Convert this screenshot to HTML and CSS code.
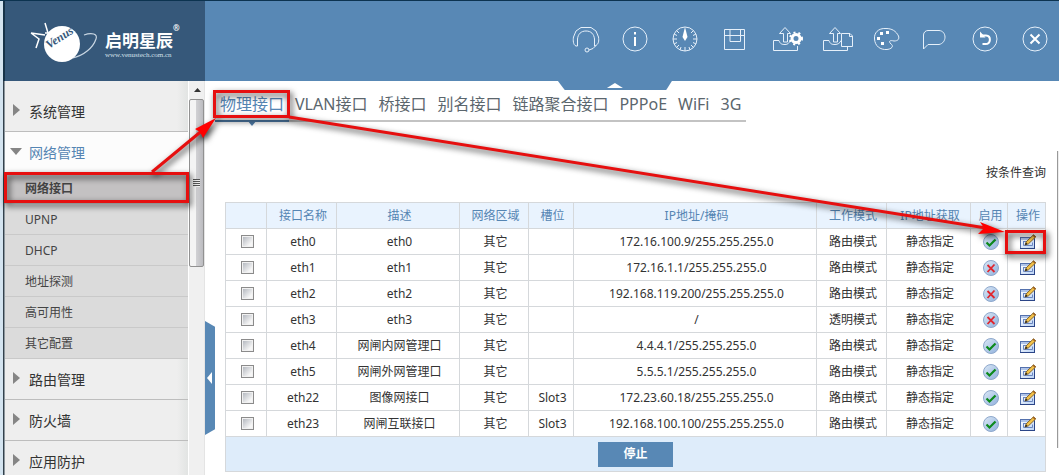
FILE: index.html
```
<!DOCTYPE html>
<html lang="zh-CN">
<head>
<meta charset="utf-8">
<title>物理接口</title>
<link rel="stylesheet" href="styles.css">
</head>
<body>
<svg class="symbols" aria-hidden="true">
  <defs>
    <linearGradient id="orb" x1="0" y1="0" x2="1" y2="1">
      <stop offset="0" stop-color="#dce9f6"/><stop offset="1" stop-color="#8fb0dc"/>
    </linearGradient>
    <linearGradient id="win" x1="0" y1="0" x2="1" y2="1">
      <stop offset="0" stop-color="#ffffff"/><stop offset="1" stop-color="#b9d2f5"/>
    </linearGradient>
    <symbol id="on" viewBox="0 0 16 16">
      <circle cx="8" cy="8" r="7.5" fill="url(#orb)" stroke="#8ea8cc"/>
      <path d="M3.5 8.5 L6.5 11.5 L12.5 5.5" fill="none" stroke="#0c8a1c" stroke-width="2.2"/>
    </symbol>
    <symbol id="off" viewBox="0 0 16 16">
      <circle cx="8" cy="8" r="7.5" fill="url(#orb)" stroke="#8ea8cc"/>
      <path d="M4.500 5 L11.500 12 M11.500 4.500 L4.500 12" fill="none" stroke="#e0262e" stroke-width="1.800"/>
    </symbol>
    <symbol id="edit" viewBox="0 0 18 16">
      <rect x="1.500" y="3.500" width="14" height="11" fill="url(#win)" stroke="#5471ad"/>
      <path d="M1 14.500 H16 M15.500 5 V15" stroke="#2b4587" fill="none"/>
      <path d="M2 5 H12" stroke="#6f93d6"/>
      <path d="M4.500 7.500 H8 M4.500 7 V11.500 H13.500 V8.500" fill="none" stroke="#6a86c0"/>
      <path d="M6 11 L7.200 7.800 L14.500 .8 L16.800 2.800 L9.500 9.800 Z" fill="#f3c24a" stroke="#6b4a12" stroke-width=".8"/>
      <path d="M14 1.300 L16.300 3.300" stroke="#a2601c" stroke-width="1.300"/>
      <path d="M6 11 L7 8.500 L8.500 10 Z" fill="#222"/>
    </symbol>
  </defs>
</svg>

<div class="window">
  <header class="header">
    <div class="brand">
      <svg class="brand-mark" viewBox="0 0 72 44" aria-hidden="true">
        <path d="M54 14 C62 11 68 13 66 18 C63 27 54 34 43 37" fill="none" stroke="#c9d6e3" stroke-width="1.200"/>
        <path d="M15 2 L18 12 M1 12 L15 14 M1 12 L9 18 L6 27" fill="none" stroke="#fff" stroke-width="1.500"/>
        <circle cx="32" cy="23" r="18" fill="#fff"/>
        <path d="M15 12 L30 12" stroke="#fff" stroke-width="1.500"/>
        <text class="brand-venus" x="19" y="28" transform="rotate(-33 19 28)">Venus</text>
      </svg>
      <div class="brand-text">
        <strong class="brand-name">启明星辰<sup>®</sup></strong>
        <span class="brand-url">www.venustech.com.cn</span>
      </div>
    </div>
    <nav class="tools">
      <button class="tool" aria-label="技术支持"><svg viewBox="0 0 50 44"><path d="M18.500 27 H17 C14 26 14 21 14.500 18 L17 12 L22 8.500 H32 L37 12 L39.500 18 C40 22 40 25 36 27 H35.500 V20 C35 15 32 12 27 12 C22 12 19 15 18.500 20 Z M37 26.500 L34 29.500 L30 31"/><circle cx="28" cy="31" r="2"/></svg></button>
      <button class="tool" aria-label="信息"><svg viewBox="0 0 50 44"><circle cx="26" cy="20" r="12"/><path class="bold" d="M26 18 V27 M26 13 V15.500"/></svg></button>
      <button class="tool" aria-label="监控"><svg viewBox="0 0 50 44"><circle cx="26" cy="20" r="12"/><path d="M26 28 V32 M14 20 H18 M34 20 H38 M17.500 11.500 L20 14 M34.500 11.500 L32 14 M17.500 28.500 L20 26 M34.500 28.500 L32 26 M15 15 L18 16.500 M37 15 L34 16.500 M15 25 L18 23.500 M37 25 L34 23.500 M21 31 L22 28 M31 31 L30 28"/><path class="solid" d="M26 8 L28.500 18 L26 22 L23.500 18 Z"/></svg></button>
      <button class="tool" aria-label="保存"><svg viewBox="0 0 50 44"><path d="M15.500 10.500 H35.500 V30.500 H15.500 Z M15.500 16.500 H35.500 M21 10.500 V22.500 H31.500 V10.500"/></svg></button>
      <button class="tool" aria-label="导出配置"><svg viewBox="0 0 50 44"><path d="M20 21.500 H14.500 V31.500 H38.500 V27 M20 21.500 C21 25 23 25.500 26 25.500 C29 25.500 30 24 31 22 M24.500 23 V14.500 H20.500 L26 8.500 L31.500 14.500 H28.500 V23 Z"/><circle class="thick" cx="37" cy="19.500" r="4"/><circle class="teeth" cx="37" cy="19.500" r="6"/></svg></button>
      <button class="tool" aria-label="导出文件"><svg viewBox="0 0 50 44"><path d="M20 21.500 H14.500 V31.500 H38.500 V28 M20 21.500 C21 25 23 25.500 26 25.500 C29 25.500 31 24 32 21.500 M24.500 23 V14.500 H20.500 L26 8.500 L31.500 14.500 H28.500 V23 Z M32.500 14.500 H41 L43.500 17 V27.500 H32.500 Z M40.500 14.500 V17.500 H43.500"/></svg></button>
      <button class="tool" aria-label="主题"><svg viewBox="0 0 50 44"><path d="M27 9.500 C19 9 15 14 15.500 20 C16 27 21 31 28 30.500 C33 30 35 27 32 25 C29 22 31 21 35 22 C39 22 40.500 20 39.500 17 C37 12 33 9.500 27 9.500 Z"/><path class="solid" d="M21 13 h3 v3 h-3z M27 12 h3 v3 h-3z M18 18 h3 v3 h-3z M22 23 h3 v3 h-3z"/></svg></button>
      <button class="tool" aria-label="消息"><svg viewBox="0 0 50 44"><path d="M14.500 30 V16 C14.500 13 17 11.500 19 11.500 H30 C38 12 38 24 30 25.500 H19 Z"/></svg></button>
      <button class="tool" aria-label="恢复"><svg viewBox="0 0 50 44"><circle cx="26" cy="20" r="12"/><path class="bold" d="M22.500 16.500 H27 C32.500 17 32 25 26.500 25 H23.500"/><path class="solid" d="M21 12.500 V18.500 H26.500 Z"/></svg></button>
      <button class="tool" aria-label="退出"><svg viewBox="0 0 50 44"><circle cx="26" cy="20" r="12"/><path class="bold" d="M21.500 15.500 L30.500 24.500 M30.500 15.500 L21.500 24.500"/></svg></button>
    </nav>
  </header>

  <div class="body">
    <aside class="sidebar">
      <nav class="menu">
        <a class="group" href="#"><span class="caret"></span>系统管理</a>
        <a class="group group-open" href="#"><span class="caret caret-down"></span>网络管理</a>
        <a class="item item-current" href="#">网络接口</a>
        <a class="item" href="#">UPNP</a>
        <a class="item" href="#">DHCP</a>
        <a class="item" href="#">地址探测</a>
        <a class="item" href="#">高可用性</a>
        <a class="item" href="#">其它配置</a>
        <a class="group" href="#"><span class="caret"></span>路由管理</a>
        <a class="group" href="#"><span class="caret"></span>防火墙</a>
        <a class="group" href="#"><span class="caret"></span>应用防护</a>
      </nav>
      <div class="scroll">
        <span class="scroll-up"></span>
        <div class="scroll-thumb"><span class="grip"></span></div>
      </div>
    </aside>

    <main class="main">
      <button class="pull" aria-label="收起顶部"><span class="pull-mark"></span></button>
      <button class="fold" aria-label="收起菜单"><span class="fold-mark"></span></button>
      <nav class="tabs">
        <a class="tab tab-current" href="#">物理接口</a>
        <a class="tab" href="#">VLAN接口</a>
        <a class="tab" href="#">桥接口</a>
        <a class="tab" href="#">别名接口</a>
        <a class="tab" href="#">链路聚合接口</a>
        <a class="tab" href="#">PPPoE</a>
        <a class="tab" href="#">WiFi</a>
        <a class="tab" href="#">3G</a>
      </nav>
      <div class="query"><a href="#">按条件查询</a></div>
      <table class="grid">
        <colgroup>
          <col class="c-check"><col class="c-name"><col class="c-desc"><col class="c-zone"><col class="c-slot"><col><col class="c-mode"><col class="c-get"><col class="c-on"><col class="c-act">
        </colgroup>
        <thead>
          <tr><th></th><th>接口名称</th><th>描述</th><th>网络区域</th><th>槽位</th><th>IP地址/掩码</th><th>工作模式</th><th>IP地址获取</th><th>启用</th><th>操作</th></tr>
        </thead>
        <tbody>
          <tr><td><input type="checkbox" aria-label="eth0"></td><td>eth0</td><td>eth0</td><td>其它</td><td></td><td>172.16.100.9/255.255.255.0</td><td>路由模式</td><td>静态指定</td><td><svg class="state"><use href="#on"/></svg></td><td><button class="edit" aria-label="编辑"><svg><use href="#edit"/></svg></button></td></tr>
          <tr><td><input type="checkbox" aria-label="eth1"></td><td>eth1</td><td>eth1</td><td>其它</td><td></td><td>172.16.1.1/255.255.255.0</td><td>路由模式</td><td>静态指定</td><td><svg class="state"><use href="#off"/></svg></td><td><button class="edit" aria-label="编辑"><svg><use href="#edit"/></svg></button></td></tr>
          <tr><td><input type="checkbox" aria-label="eth2"></td><td>eth2</td><td>eth2</td><td>其它</td><td></td><td>192.168.119.200/255.255.255.0</td><td>路由模式</td><td>静态指定</td><td><svg class="state"><use href="#off"/></svg></td><td><button class="edit" aria-label="编辑"><svg><use href="#edit"/></svg></button></td></tr>
          <tr><td><input type="checkbox" aria-label="eth3"></td><td>eth3</td><td>eth3</td><td>其它</td><td></td><td>/</td><td>透明模式</td><td>静态指定</td><td><svg class="state"><use href="#off"/></svg></td><td><button class="edit" aria-label="编辑"><svg><use href="#edit"/></svg></button></td></tr>
          <tr><td><input type="checkbox" aria-label="eth4"></td><td>eth4</td><td>网闸内网管理口</td><td>其它</td><td></td><td>4.4.4.1/255.255.255.0</td><td>路由模式</td><td>静态指定</td><td><svg class="state"><use href="#on"/></svg></td><td><button class="edit" aria-label="编辑"><svg><use href="#edit"/></svg></button></td></tr>
          <tr><td><input type="checkbox" aria-label="eth5"></td><td>eth5</td><td>网闸外网管理口</td><td>其它</td><td></td><td>5.5.5.1/255.255.255.0</td><td>路由模式</td><td>静态指定</td><td><svg class="state"><use href="#on"/></svg></td><td><button class="edit" aria-label="编辑"><svg><use href="#edit"/></svg></button></td></tr>
          <tr><td><input type="checkbox" aria-label="eth22"></td><td>eth22</td><td>图像网接口</td><td>其它</td><td>Slot3</td><td>172.23.60.18/255.255.255.0</td><td>路由模式</td><td>静态指定</td><td><svg class="state"><use href="#on"/></svg></td><td><button class="edit" aria-label="编辑"><svg><use href="#edit"/></svg></button></td></tr>
          <tr><td><input type="checkbox" aria-label="eth23"></td><td>eth23</td><td>网闸互联接口</td><td>其它</td><td>Slot3</td><td>192.168.100.100/255.255.255.0</td><td>路由模式</td><td>静态指定</td><td><svg class="state"><use href="#on"/></svg></td><td><button class="edit" aria-label="编辑"><svg><use href="#edit"/></svg></button></td></tr>
        </tbody>
        <tfoot>
          <tr><td colspan="10"><button class="stop">停止</button></td></tr>
        </tfoot>
      </table>
      <span class="rail"></span>
    </main>
  </div>

  <svg class="notes" width="1059" height="475" viewBox="0 0 1059 475" aria-hidden="true">
    <g fill="none" stroke="#e60f0f" stroke-width="3">
      <rect x="5.500" y="173.500" width="182" height="28"/>
      <rect x="214.500" y="91.500" width="74" height="25"/>
      <rect x="1006.500" y="231.500" width="38" height="21"/>
      <path d="M152 172 L204 129 M289 117 L986 228"/>
    </g>
    <path fill="#f00" d="M216 118 L195 129 L200 132 L203 138 Z M1005 232 L980 222 L984 228 L978 234 Z"/>
  </svg>
</div>
</body>
</html>
```
FILE: styles.css
```
* { box-sizing: border-box; }

body {
  margin: 0;
  font: 12px/20px "Noto Sans", "Noto Sans CJK SC", sans-serif;
  color: #333;
  background: #fff;
}

a { color: inherit; text-decoration: none; }

button {
  padding: 0;
  border: 0;
  background: none;
  font: inherit;
  color: inherit;
}

.symbols { position: absolute; width: 0; height: 0; }

.window {
  position: relative;
  display: flex;
  flex-direction: column;
  height: 100vh;
  overflow: hidden;
  border-top: 1px solid #0c3350;
}

/* header */
.header {
  display: flex;
  flex: none;
  height: 80px;
  padding-left: 5px;
  background: linear-gradient(90deg, #d4e4f0 3px, #173349 3px 5px, #5888b5 5px);
}

.brand {
  display: flex;
  flex: none;
  width: 200px;
  padding: 20px 0 0 25px;
  background: #36587a;
  color: #fff;
}

.brand-mark { width: 72px; height: 44px; flex: none; }

.brand-venus {
  font: bold italic 12px "Liberation Serif", serif;
  fill: #36587a;
}

.brand-text {
  display: flex;
  flex-direction: column;
  padding: 10px 0 0 3px;
}

.brand-name {
  display: flex;
  font-size: 17px;
  line-height: 20px;
  white-space: nowrap;
}

.brand-name sup { font-size: 8px; line-height: 8px; margin-top: -7px; vertical-align: top; }

.brand-url {
  font: 7px/8px "Liberation Serif", serif;
  color: #d5e0eb;
  white-space: nowrap;
}

.tools {
  display: flex;
  flex: 1;
  justify-content: flex-end;
  align-items: center;
}

.tool { width: 50px; height: 44px; }

.tool svg {
  display: block;
  width: 50px;
  height: 44px;
  fill: none;
  stroke: #e6f0fa;
  stroke-width: 1;
}

.tool .bold { stroke: #fff; stroke-width: 2; }
.tool .solid { fill: #fff; stroke: none; }
.tool .thick { stroke: #fff; stroke-width: 3; fill: #5888b5; }
.tool .teeth { stroke: #fff; stroke-width: 2; stroke-dasharray: 2 3; }

/* sidebar */
.body { display: flex; flex: 1; min-height: 0; }

.sidebar {
  display: flex;
  flex: none;
  width: 205px;
  padding-left: 5px;
  overflow: hidden;
  background: linear-gradient(90deg, #d4e4f0 3px, #33414c 3px 4px, #8d979e 4px 5px, #eee 5px);
}

.menu {
  flex: 1;
  padding-top: 10px;
  background: linear-gradient(90deg, #eee 172px, #e2e4e3);
  border-right: 1px solid #fff;
}

.group {
  display: flex;
  align-items: center;
  height: 41px;
  padding-top: 2px;
  border-bottom: 1px solid #bdbdbd;
  font-size: 14px;
}

.group-open { background: #fcfcfc; color: #5585b3; border-bottom-color: #fcfcfc; }

.caret { width: 24px; height: 16px; }

.caret::before {
  content: "";
  display: block;
  width: 7px;
  height: 12px;
  margin-left: 8px;
  background: #858585;
  clip-path: polygon(0 0, 100% 50%, 0 100%);
}

.caret-down::before {
  width: 12px;
  height: 7px;
  margin: 3px 0 0 5px;
  clip-path: polygon(0 0, 100% 0, 50% 100%);
}

.item {
  display: block;
  height: 31px;
  padding-left: 20px;
  line-height: 32px;
  background: #dbdbdb;
  border-bottom: 1px solid #c9c9c9;
  color: #444;
}

.item-current { background: #c3c1c2; font-weight: bold; }

.scroll {
  flex: none;
  width: 16px;
  background: #f0f0f0;
  border-right: 1px solid #e4e4e4;
}

.scroll-up {
  display: block;
  width: 7px;
  height: 4px;
  margin: 7px 5px;
  background: #333;
  clip-path: polygon(50% 0, 100% 100%, 0 100%);
}

.scroll-thumb {
  display: flex;
  align-items: center;
  justify-content: center;
  height: 168px;
  border: 1px solid #919191;
  border-radius: 2px;
  background: linear-gradient(90deg, #f4f4f4 45%, #d0d0d3 50%, #bcbcc0);
}

.grip {
  width: 7px;
  height: 8px;
  background: repeating-linear-gradient(#555 0 1px, #eee 1px 2px);
}

/* content */
.main {
  position: relative;
  flex: 1;
  min-width: 0;
  padding: 0 13px 0 20px;
  background: #fff;
}

.pull {
  position: absolute;
  top: 0;
  left: 48%;
  width: 114px;
  height: 9px;
  transform: translateX(-50%);
  background: #5888b5;
  clip-path: polygon(0 0, 100% 0, 95% 100%, 6% 100%);
}

.pull-mark {
  display: block;
  width: 16px;
  height: 5px;
  margin: auto;
  background: #fff;
  clip-path: polygon(50% 0, 100% 100%, 0 100%);
}

.fold {
  position: absolute;
  left: 0;
  top: 240px;
  width: 10px;
  height: 114px;
  background: #5888b5;
  clip-path: polygon(0 0, 100% 5%, 100% 95%, 0 100%);
}

.fold-mark {
  display: block;
  width: 5px;
  height: 12px;
  margin-left: 2px;
  background: #fff;
  clip-path: polygon(0 50%, 100% 0, 100% 100%);
}

.tabs {
  display: flex;
  width: max-content;
  margin-left: -10px;
  padding-top: 9px;
  font-size: 16px;
  line-height: 28px;
  color: #5b666d;
}

.tab {
  position: relative;
  padding: 0 5px 2px;
  border-bottom: 2px solid #c3c3c3;
}

.tab + .tab { padding-left: 6px; }

.tab-current { color: #5585b3; border-bottom-color: #4f7ca8; }

.tab-current::after {
  content: "";
  position: absolute;
  top: 100%;
  left: 50%;
  width: 10px;
  height: 6px;
  margin-left: -5px;
  background: #4f7ca8;
  clip-path: polygon(0 0, 100% 0, 50% 100%);
}

.query { margin: 41px 0 19px; text-align: right; }

.grid {
  width: 100%;
  table-layout: fixed;
  border-collapse: collapse;
  text-align: center;
}

.c-check { width: 41px; }
.c-name, .c-mode { width: 70px; }
.c-desc { width: 123px; }
.c-zone { width: 69px; }
.c-slot { width: 45px; }
.c-get { width: 84px; }
.c-on { width: 37px; }
.c-act { width: 38px; }

.grid th,
.grid td {
  height: 26px;
  padding: 0 0 0 3px;
  border: 1px solid #d5d8db;
  font-weight: normal;
  white-space: nowrap;
}

.grid th { background: #e9f3fe; color: #5585b3; }

.grid tfoot td { height: 35px; padding: 0; background: #deecfa; }

.grid input {
  appearance: none;
  display: block;
  width: 13px;
  height: 13px;
  margin: 0 auto;
  border: 1px solid #8b8b8b;
  padding: 1px;
  background: linear-gradient(135deg, #b5b9c0, #f6f6f6 80%) content-box, #f1f1f1;
}

.state { display: block; width: 16px; height: 16px; margin: 0 auto; }

.edit { display: block; margin: 0 auto; }
.edit svg { display: block; width: 18px; height: 16px; }

.stop {
  width: 75px;
  height: 25px;
  background: #5888b5;
  color: #fff;
  font-weight: bold;
}

.rail {
  position: absolute;
  top: 70px;
  right: 0;
  width: 2px;
  height: 297px;
  background: #ededed;
  border-left: 1px solid #999;
}

/* callouts drawn over the page */
.notes {
  position: absolute;
  top: -1px;
  left: 0;
  pointer-events: none;
  filter: drop-shadow(2px 3px 3px rgba(0, 0, 0, .8));
}
```
